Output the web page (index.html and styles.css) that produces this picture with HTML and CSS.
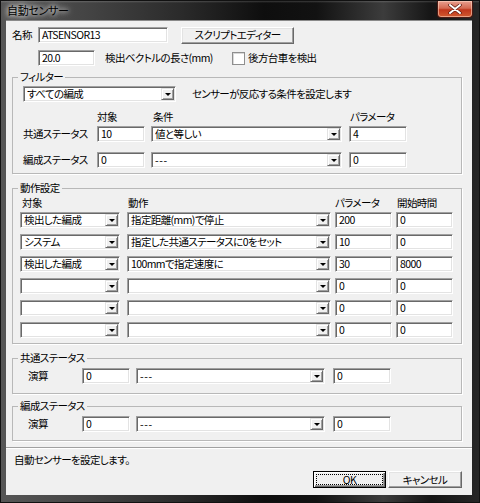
FILE: index.html
```html
<!DOCTYPE html>
<html lang="ja">
<head>
<meta charset="utf-8">
<title>自動センサー</title>
<link rel="stylesheet" href="styles.css">
</head>
<body>
<div class="window">
  <div class="titlebar">
    <span class="title">自動センサー</span>
    <span class="close"><svg width="14" height="10" viewBox="0 0 14 10"><path d="M2 1 L12 9 M12 1 L2 9" stroke="#5a1a10" stroke-width="3.4" stroke-linecap="round"/><path d="M2 1 L12 9 M12 1 L2 9" stroke="#fff" stroke-width="2" stroke-linecap="round"/></svg></span>
  </div>
  <div class="client">
    <div class="row r1">
      <span class="lbl name-lbl">名称</span>
      <span class="edit w-name">ATSENSOR13</span>
      <span class="btn script-btn">スクリプトエディター</span>
    </div>
    <div class="row r2">
      <span class="edit w-len">20.0</span>
      <span class="lbl len-lbl">検出ベクトルの長さ(mm)</span>
      <span class="chk"></span>
      <span class="lbl chk-lbl">後方台車を検出</span>
    </div>

    <fieldset class="group g-filter">
      <legend>フィルター</legend>
      <div class="gbody fbody">
        <div class="row">
          <span class="combo w-all"><span class="val">すべての編成</span><span class="drop"><i></i></span></span>
          <span class="lbl desc">センサーが反応する条件を設定します</span>
        </div>
        <div class="row fhead">
          <span class="h-tg">対象</span>
          <span class="h-cond">条件</span>
          <span>パラメータ</span>
        </div>
        <div class="row frow">
          <span class="lbl flbl">共通ステータス</span>
          <span class="edit w-ftg">10</span>
          <span class="combo w-fcond"><span class="val">値と等しい</span><span class="drop"><i></i></span></span>
          <span class="edit w-fpar">4</span>
        </div>
        <div class="row frow frow2">
          <span class="lbl flbl">編成ステータス</span>
          <span class="edit w-ftg">0</span>
          <span class="combo w-fcond"><span class="val dash">---</span><span class="drop"><i></i></span></span>
          <span class="edit w-fpar">0</span>
        </div>
      </div>
    </fieldset>

    <fieldset class="group g-action">
      <legend>動作設定</legend>
      <div class="gbody abody">
        <div class="row ahead">
          <span class="ah-tg">対象</span>
          <span class="ah-act">動作</span>
          <span class="ah-par">パラメータ</span>
          <span>開始時間</span>
        </div>
        <div class="arows">
          <div class="row">
            <span class="combo w-atg"><span class="val">検出した編成</span><span class="drop"><i></i></span></span>
            <span class="combo w-aact"><span class="val">指定距離(mm)で停止</span><span class="drop"><i></i></span></span>
            <span class="edit w-apar">200</span>
            <span class="edit w-atime">0</span>
          </div>
          <div class="row">
            <span class="combo w-atg"><span class="val">システム</span><span class="drop"><i></i></span></span>
            <span class="combo w-aact"><span class="val">指定した共通ステータスに0をセット</span><span class="drop"><i></i></span></span>
            <span class="edit w-apar">10</span>
            <span class="edit w-atime">0</span>
          </div>
          <div class="row">
            <span class="combo w-atg"><span class="val">検出した編成</span><span class="drop"><i></i></span></span>
            <span class="combo w-aact"><span class="val">100mmで指定速度に</span><span class="drop"><i></i></span></span>
            <span class="edit w-apar">30</span>
            <span class="edit w-atime">8000</span>
          </div>
          <div class="row">
            <span class="combo w-atg"><span class="val"></span><span class="drop"><i></i></span></span>
            <span class="combo w-aact"><span class="val"></span><span class="drop"><i></i></span></span>
            <span class="edit w-apar">0</span>
            <span class="edit w-atime">0</span>
          </div>
          <div class="row">
            <span class="combo w-atg"><span class="val"></span><span class="drop"><i></i></span></span>
            <span class="combo w-aact"><span class="val"></span><span class="drop"><i></i></span></span>
            <span class="edit w-apar">0</span>
            <span class="edit w-atime">0</span>
          </div>
          <div class="row">
            <span class="combo w-atg"><span class="val"></span><span class="drop"><i></i></span></span>
            <span class="combo w-aact"><span class="val"></span><span class="drop"><i></i></span></span>
            <span class="edit w-apar">0</span>
            <span class="edit w-atime">0</span>
          </div>
        </div>
      </div>
    </fieldset>

    <fieldset class="group g-common">
      <legend>共通ステータス</legend>
      <div class="gbody sbody">
        <div class="row">
          <span class="lbl slbl">演算</span>
          <span class="edit w-s1">0</span>
          <span class="combo w-s2"><span class="val dash">---</span><span class="drop"><i></i></span></span>
          <span class="edit w-s3">0</span>
        </div>
      </div>
    </fieldset>

    <fieldset class="group g-form">
      <legend>編成ステータス</legend>
      <div class="gbody sbody sbody2">
        <div class="row">
          <span class="lbl slbl">演算</span>
          <span class="edit w-s1">0</span>
          <span class="combo w-s2"><span class="val dash">---</span><span class="drop"><i></i></span></span>
          <span class="edit w-s3">0</span>
        </div>
      </div>
    </fieldset>

    <div class="sep"></div>
    <div class="status">自動センサーを設定します。</div>
    <div class="row buttons">
      <span class="btn ok"><span class="focus">OK</span></span>
      <span class="btn cancel">キャンセル</span>
    </div>
  </div>
</div>
</body>
</html>
```

FILE: styles.css
```css
* { box-sizing: border-box; }
html, body { margin: 0; padding: 0; }
body {
  width: 480px;
  height: 503px;
  overflow: hidden;
  background: #000;
  font-family: "Noto Sans CJK JP", "Noto Sans", sans-serif;
  font-size: 10.5px;
  letter-spacing: -0.6px;
  font-feature-settings: "palt";
  color: #000;
}
.window {
  width: 480px;
  height: 503px;
  display: flex;
  flex-direction: column;
  background:
    linear-gradient(180deg, rgba(255,255,255,0.18) 0, rgba(255,255,255,0) 2px),
    linear-gradient(90deg, #565656 0%, #444 18%, #2a2a2a 38%, #0e0e0e 55%, #121212 66%, #3c3c3c 80%, #151515 90%, #262626 100%);
  border: 1px solid #111;
}
.titlebar {
  height: 19px;
  display: flex;
  align-items: flex-start;
  padding-left: 6px;
}
.title {
  font-size: 11px;
  letter-spacing: -0.3px;
  line-height: 18px;
  color: #000;
  text-shadow: 0 0 4px #ddd, 0 0 6px #ccc, 0 0 8px #bbb;
}
.close {
  margin-left: auto;
  margin-right: 6px;
  width: 36px;
  height: 17px;
  display: flex;
  align-items: center;
  justify-content: center;
  border: 1px solid #4a1a14;
  border-top: none;
  border-radius: 0 0 4px 4px;
  background: linear-gradient(180deg, #e8a090 0%, #d46a52 45%, #c0361c 55%, #d05a30 100%);
  box-shadow: inset 0 0 0 1px rgba(255,220,200,0.55);
}
.client {
  margin-left: 5px;
  width: 466px;
  height: 475px;
  background: #f0f0f0;
  border-top: 1px solid #8a8a8a;
  display: flex;
  flex-direction: column;
}
.row {
  display: flex;
  align-items: center;
  height: 16px;
  flex-shrink: 0;
}
.lbl { white-space: nowrap; line-height: 16px; }
.edit, .combo {
  height: 16px;
  background: #fff;
  border-top: 1px solid #a0a0a0;
  border-left: 1px solid #a0a0a0;
  border-right: 1px solid #fff;
  border-bottom: 1px solid #fff;
  box-shadow: inset 1px 1px 0 #696969, inset -1px -1px 0 #e3e3e3;
  line-height: 14px;
  padding-left: 3px;
  white-space: nowrap;
  overflow: hidden;
  flex-shrink: 0;
}
.combo {
  display: flex;
  align-items: center;
  padding-right: 1px;
}
.combo .val { flex: 1; overflow: hidden; line-height: 14px; }
.combo .dash { letter-spacing: 0.6px; }
.drop {
  width: 13px;
  height: 12px;
  flex-shrink: 0;
  background: #f0f0f0;
  border-top: 1px solid #e3e3e3;
  border-left: 1px solid #e3e3e3;
  border-right: 1px solid #696969;
  border-bottom: 1px solid #696969;
  box-shadow: inset 1px 1px 0 #fff, inset -1px -1px 0 #a0a0a0;
  display: flex;
  align-items: center;
  justify-content: center;
}
.drop i {
  display: block;
  width: 0;
  height: 0;
  border-left: 3px solid transparent;
  border-right: 3px solid transparent;
  border-top: 3px solid #000;
  margin-top: 1px;
}
.btn {
  height: 16px;
  display: flex;
  align-items: center;
  justify-content: center;
  background: #f0f0f0;
  border-top: 1px solid #fff;
  border-left: 1px solid #fff;
  border-right: 1px solid #696969;
  border-bottom: 1px solid #696969;
  box-shadow: inset -1px -1px 0 #a0a0a0, inset 1px 1px 0 #e3e3e3;
  line-height: 14px;
  white-space: nowrap;
  flex-shrink: 0;
}

/* top rows */
.r1 { margin-top: 6px; padding-left: 6px; }
.name-lbl { width: 26px; }
.w-name { width: 130px; }
.script-btn { margin-left: 13px; width: 113px; height: 17px; }
.r2 { margin-top: 7px; padding-left: 32px; }
.w-len { width: 57px; }
.len-lbl { margin-left: 10px; width: 127px; }
.chk {
  width: 13px;
  height: 13px;
  background: #fff;
  border: 1px solid #8f8f8f;
  box-shadow: inset 1px 1px 0 #d8d8d8;
  flex-shrink: 0;
}
.chk-lbl { margin-left: 3px; }

/* group boxes */
.group {
  margin: 0 0 0 6px;
  padding: 0;
  width: 450px;
  min-width: 0;
  border: 1px solid #b8b8b8;
  box-shadow: 1px 1px 0 #fff;
  flex-shrink: 0;
}
.group legend {
  margin-left: 5px;
  padding: 0 2px;
  line-height: 14px;
  height: 14px;
  background: #f0f0f0;
}
.g-filter { margin-top: 4px; }
.fbody { padding: 2px 0 5px 10px; }
.w-all { width: 153px; }
.desc { margin-left: 16px; }
.fhead { margin-top: 7px; padding-left: 74px; line-height: 16px; }
.h-tg { width: 56px; }
.h-cond { width: 197px; }
.frow { margin-top: 1px; }
.frow2 { margin-top: 10px; }
.flbl { width: 74px; }
.w-ftg { width: 48px; }
.w-fcond { width: 191px; margin-left: 6px; }
.w-fpar { width: 58px; margin-left: 7px; }

.g-action { margin-top: 7px; }
.abody { padding: 0 0 5px 7px; }
.ahead { height: 14px; line-height: 14px; padding-left: 2px; margin-top: 1px; }
.ah-tg { width: 106px; }
.ah-act { width: 207px; }
.ah-par { width: 62px; }
.arows { margin-top: 2px; display: flex; flex-direction: column; gap: 6px; }
.w-atg { width: 100px; }
.w-aact { width: 204px; margin-left: 7px; }
.w-apar { width: 57px; margin-left: 4px; }
.w-atime { width: 57px; margin-left: 4px; }

.g-common { margin-top: 7px; }
.g-form { margin-top: 5px; }
.sbody { padding: 3px 0 9px 14px; }
.sbody2 { padding-bottom: 8px; }
.slbl { width: 55px; padding-left: 1px; }
.w-s1 { width: 48px; }
.w-s2 { width: 189px; margin-left: 6px; }
.w-s3 { width: 58px; margin-left: 8px; }

.sep {
  margin-top: 6px;
  height: 2px;
  border-top: 1px solid #a0a0a0;
  border-bottom: 1px solid #fff;
  flex-shrink: 0;
}
.status { margin-top: 4px; padding-left: 8px; line-height: 14px; height: 14px; }
.buttons { margin-top: 4px; justify-content: flex-end; padding-right: 10px; height: 17px; }
.ok {
  width: 73px;
  height: 17px;
  border: 1px solid #000;
  box-shadow: inset 1px 1px 0 #fff, inset -1px -1px 0 #696969, inset -2px -2px 0 #a0a0a0;
  padding: 2px;
}
.ok .focus {
  width: 100%;
  height: 100%;
  border: 1px dotted #000;
  display: flex;
  align-items: center;
  justify-content: center;
  line-height: 11px;
}
.cancel { width: 74px; height: 17px; margin-left: 2px; }
```
